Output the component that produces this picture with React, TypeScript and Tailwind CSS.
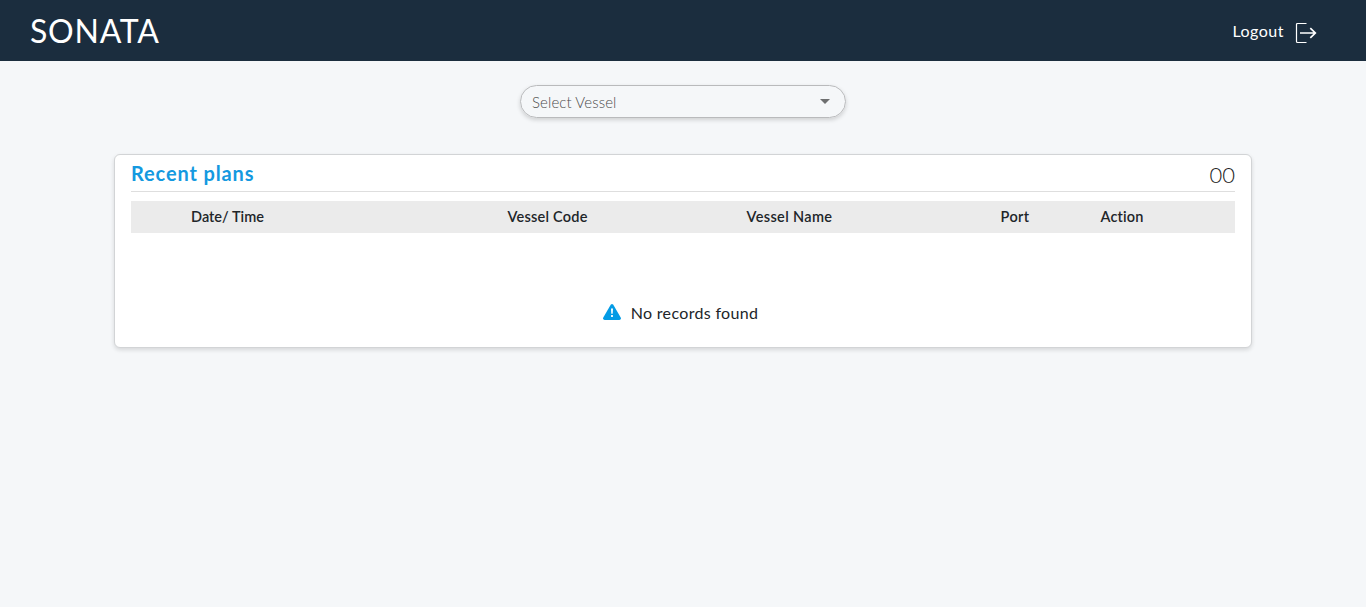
const columns = [
  { label: 'Date/ Time', spacing: 'tracking-[0.03px]' },
  { label: 'Vessel Code', spacing: 'tracking-[0.22px]' },
  { label: 'Vessel Name', spacing: 'tracking-[0.35px]' },
  { label: 'Port', spacing: 'tracking-[0.4px]' },
  { label: 'Action', spacing: 'tracking-[0.15px]' },
];

function LogoutIcon() {
  return (
    <svg width="22" height="22" viewBox="0 0 22 22" fill="none" stroke="#fff" className="ml-[11px] mt-1">
      <path d="M11.5 1.5H2.5Q1.5 1.5 1.5 2.5V19.5Q1.5 20.5 2.5 20.5H11.5" strokeWidth="1.2" />
      <path d="M5 11H20.5M15.3 6.2L20.3 11L15.3 15.8" strokeWidth="1.7" />
    </svg>
  );
}

function WarningIcon() {
  return (
    <svg width="18" height="16" viewBox="0 0 18 16" className="-mt-[3px]">
      <path d="M7.7.8Q9-.7 10.3.8L17.7 13.4Q18.5 15.7 16.3 16H1.7Q-.5 15.7.3 13.4Z" fill="#039be5" />
      <path d="M8 4.5h2l-.3 5.2H8.3ZM8.1 11.1h1.8v1.9H8.1Z" fill="#fff" />
    </svg>
  );
}

export default function App() {
  return (
    <div className="min-h-screen bg-[#f5f7f9] font-['Lato',sans-serif] text-[#212529]">
      <header className="flex h-[61px] items-center justify-between bg-[#1b2d3e] pl-[30px] pr-[49px] text-white">
        <h1 className="text-[32px] leading-[60px] tracking-[0.75px]">SONATA</h1>
        <button className="flex items-center">
          <span className="text-[16px] leading-6 tracking-[0.5px]">Logout</span>
          <LogoutIcon />
        </button>
      </header>
      <main className="flex flex-col items-center pt-6">
        <button className="flex h-[33px] w-[326px] items-center justify-between rounded-full border border-[#b9babc] pl-[11px] pr-[15px] shadow-[0_2px_4px_rgba(0,0,0,0.16)]">
          <span className="pt-px text-[15px] font-light leading-5 tracking-[0.1px] text-[#4c4c4c]">Select Vessel</span>
          <svg width="10" height="5" viewBox="0 0 10 5" className="-mt-px">
            <path d="M0 0h10L5 5z" fill="#6e6f70" />
          </svg>
        </button>
        <section className="mt-9 h-[194px] w-[1138px] rounded-md border border-[#d2d4d6] bg-white px-4 shadow-[0_2px_4px_rgba(0,0,0,0.13)]">
          <div className="flex h-[37px] items-center justify-between border-b border-[#dedede]">
            <h2 className="text-[20px] font-bold leading-6 tracking-[0.86px] text-[#1499e0]">Recent plans</h2>
            <span className="pt-1 text-[22px] font-light leading-7 text-[#222]">00</span>
          </div>
          <div className="mt-[9px] grid h-8 grid-cols-[316.5px_239px_254px_100px_1fr] items-center bg-[#ebebeb] pl-[60px] text-[14.5px] font-semibold leading-5">
            {columns.map((column) => (
              <span key={column.label} className={column.spacing}>{column.label}</span>
            ))}
          </div>
          <div className="mt-[68px] flex h-6 items-center justify-center pr-[5px]">
            <WarningIcon />
            <span className="ml-[10px] text-[16px] leading-6 tracking-[0.33px]">No records found</span>
          </div>
        </section>
      </main>
    </div>
  );
}
